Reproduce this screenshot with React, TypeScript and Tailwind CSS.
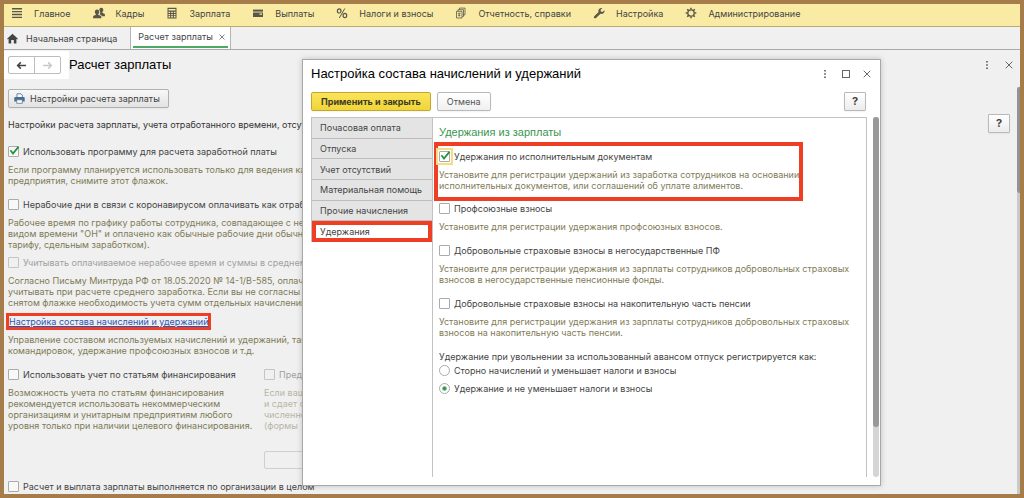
import type { ReactNode } from 'react';

type MenuEntry = { label: string; icon: ReactNode };

function Svg({ children }: { children: ReactNode }) {
  return (
    <svg viewBox="0 0 12 12" className="h-3 w-3 shrink-0 text-[#5a574a]" fill="currentColor" aria-hidden="true">
      {children}
    </svg>
  );
}

const menu: MenuEntry[] = [
  {
    label: 'Главное',
    icon: <Svg><path d="M1 1h10v1.400H1zM1 3.900h10v1.400H1zM1 6.800h10v1.400H1zM1 9.700h10v1.400H1z" /></Svg>,
  },
  {
    label: 'Кадры',
    icon: (
      <Svg>
        <path d="M8.200.8c1.300 0 2.100.9 2.100 2.200 0 .9-.4 1.700-1 2.100v.7l2.100.9c.4.2.5.5.5.9v1.600H8.800c-.1-.7-.6-1.200-1.400-1.500l-.8-.4c.4-.6.6-1.300.6-2.100 0-1-.4-1.800-1-2.300C6.400 1.500 7.200.8 8.200.8z" />
        <path d="M4 2.600c1.300 0 2.200.9 2.200 2.300 0 .9-.4 1.700-1 2.100v.8l2.500 1c.4.2.6.5.6.9v1.500H.1V9.700c0-.4.2-.7.6-.9l2.200-1V7c-.6-.4-1-1.200-1-2.100C1.900 3.500 2.700 2.600 4 2.600z" />
      </Svg>
    ),
  },
  {
    label: 'Зарплата',
    icon: (
      <Svg>
        <path fillRule="evenodd" d="M1.500.8h9v10.700h-9zM2.500 1.900v1.700h7V1.900zM2.500 4.700v1.400h1.600V4.700zM5.200 4.700v1.400h1.600V4.700zM7.900 4.700v1.400h1.600V4.700zM2.500 6.900v1.400h1.600V6.900zM5.200 6.900v1.400h1.600V6.900zM7.900 6.900v1.400h1.600V6.900zM2.500 9.100v1.400h1.600V9.100zM5.200 9.100v1.400h1.600V9.100zM7.900 9.100v1.400h1.600V9.100z" />
      </Svg>
    ),
  },
  {
    label: 'Выплаты',
    icon: (
      <Svg>
        <path d="M1 2.600h10v2H1z" />
        <path fillRule="evenodd" d="M1 5.400h10V10H1zM7.500 6.500v1.200h2.500V6.500z" />
      </Svg>
    ),
  },
  {
    label: 'Налоги и взносы',
    icon: (
      <Svg>
        <g fill="none" stroke="currentColor" strokeWidth="1.200">
          <ellipse cx="3.200" cy="3.900" rx="1.800" ry="2.100" />
          <ellipse cx="8.900" cy="8.500" rx="1.800" ry="2.100" />
          <path d="M8.800 1.500L3.300 11" strokeWidth="1" />
        </g>
      </Svg>
    ),
  },
  {
    label: 'Отчетность, справки',
    icon: (
      <Svg>
        <g fill="none" stroke="currentColor" strokeWidth=".8">
          <path d="M1.500 4.300H7V11H1.500zM3 4.100V2.700h5.500v6.700H7.200M4.500 2.500V1.100H10v6.800H8.700" />
          <path d="M2.800 6.300h2.800M4.200 6.300v3.200M3 8.300h2.400" />
        </g>
      </Svg>
    ),
  },
  {
    label: 'Настройка',
    icon: (
      <Svg>
        <path d="M11.400 3.200c.3 1.300-.1 2.400-1 3.100-.8.700-1.900.8-2.900.5L3 11c-.5.500-1.300.5-1.800 0s-.4-1.200.1-1.700L5.600 5c-.4-1-.2-2.100.5-2.900C6.900 1.200 8 .8 9.300 1.100L7.500 3l.4 1.600 1.600.4z" />
      </Svg>
    ),
  },
  {
    label: 'Администрирование',
    icon: (
      <Svg>
        <g fill="none" stroke="currentColor">
          <circle cx="6" cy="6" r="3.200" strokeWidth="1.300" />
          <path strokeWidth="1.500" d="M6 .7v1.900M6 9.400v1.900M.7 6h1.900M9.400 6h1.900M2.250 2.250l1.350 1.350M8.400 8.400l1.350 1.350M2.250 9.750L3.600 8.400M8.400 3.600l1.350-1.350" />
        </g>
      </Svg>
    ),
  },
];

const sections = [
  'Почасовая оплата',
  'Отпуска',
  'Учет отсутствий',
  'Материальная помощь',
  'Прочие начисления',
  'Удержания',
];

function CloseIcon({ className }: { className: string }) {
  return (
    <svg viewBox="0 0 8 8" className={className} fill="none" stroke="currentColor" strokeWidth=".9" aria-hidden="true">
      <path d="M.7.7l6.600 6.600M7.300.7L.7 7.300" />
    </svg>
  );
}

function MoreIcon() {
  return (
    <svg viewBox="0 0 8 10" className="h-2.5 w-2" fill="currentColor" aria-hidden="true">
      <path d="M3.200 1h1.600v1.600H3.200zM3.200 4.200h1.600v1.600H3.200zM3.200 7.400h1.600V9H3.200z" />
    </svg>
  );
}

function Arrow({ className }: { className: string }) {
  return (
    <svg viewBox="0 0 12 10" className={className} fill="none" stroke="currentColor" strokeWidth="1.700" aria-hidden="true">
      <path d="M11 5H2M5.200 1.500L1.700 5l3.500 3.500" />
    </svg>
  );
}

type CheckProps = { label: string; checked?: boolean; disabled?: boolean; focused?: boolean };

function Check({ label, checked, disabled, focused }: CheckProps) {
  return (
    <label className={`flex h-[11px] items-center gap-1 whitespace-nowrap ${disabled ? 'text-[#a0a0a0]' : 'text-[#444]'}`}>
      <span className={`relative flex shrink-0 ${focused ? 'outline-2 outline-offset-1 outline-[#f7dc83]' : ''}`}>
        <input
          type="checkbox"
          defaultChecked={checked}
          disabled={disabled}
          className={`h-[11px] w-[11px] appearance-none rounded-[1px] border ${disabled ? 'border-[#c4c4c4]' : 'border-[#ababab] bg-white/50'}`}
        />
        {checked && (
          <svg viewBox="0 0 11 11" className="pointer-events-none absolute inset-0 h-[11px] w-[11px] overflow-visible" fill="none" stroke="#279343" strokeWidth="1.800" aria-hidden="true">
            <path d="M2.400 4.300l2.600 3.300L10.600.6" />
          </svg>
        )}
      </span>
      {label}
    </label>
  );
}

function Radio({ label, checked }: { label: string; checked?: boolean }) {
  return (
    <label className="flex h-[11px] items-center gap-1 whitespace-nowrap">
      <input
        type="radio"
        name="dismissal"
        defaultChecked={checked}
        className="h-[11px] w-[11px] appearance-none rounded-full border border-[#ababab] bg-white checked:bg-[radial-gradient(circle,#279343_1px,white_3px)]"
      />
      {label}
    </label>
  );
}

function Hint({ lines, className = '' }: { lines: string[]; className?: string }) {
  return (
    <p className={`whitespace-nowrap text-[#7f7b56] ${className}`}>
      {lines.map(line => (
        <span key={line} className="block">{line}</span>
      ))}
    </p>
  );
}

function HelpButton() {
  return (
    <button type="button" className="h-[19px] w-[22px] rounded-[1px] border border-[#b9b9b9] bg-linear-to-b from-white to-[#ececec] text-[11px] font-bold text-[#444] shadow-xs">
      ?
    </button>
  );
}

function SettingsForm() {
  return (
    <div className="flex min-w-0 flex-1 flex-col items-start pl-1">
      <button type="button" className="mt-[9px] flex h-[19px] items-center gap-[5px] rounded-[2px] border border-[#b0b0b0] bg-linear-to-b from-[#f8f8f8] to-[#e2e2e2] pr-2 pl-[5px] shadow-xs">
        <svg viewBox="0 0 11 11" className="h-[11px] w-[11px]" aria-hidden="true">
          <path d="M3 .8h4l1.300 1.300v2.400H3z" fill="#fff" stroke="#5b7594" strokeWidth=".9" />
          <path d="M1.500 4h8c.8 0 1.200.5 1.200 1.200v3.200H.3V5.200C.3 4.500.700 4 1.500 4z" fill="#4a6d95" />
          <path d="M2.700 6.800h5.600v3.500H2.700z" fill="#fff" stroke="#5b7594" strokeWidth=".8" />
        </svg>
        Настройки расчета зарплаты
      </button>
      <p className="mt-[11px] whitespace-nowrap text-[#333]">Настройки расчета зарплаты, учета отработанного времени, отсут</p>
      <div className="mt-4">
        <Check label="Использовать программу для расчета заработной платы" checked />
      </div>
      <Hint className="mt-[7px]" lines={['Если программу планируется использовать только для ведения ка', 'предприятия, снимите этот флажок.']} />
      <div className="mt-[13px]">
        <Check label="Нерабочие дни в связи с коронавирусом оплачивать как отрабо" />
      </div>
      <Hint
        className="mt-[7px]"
        lines={[
          'Рабочее время по графику работы сотрудника, совпадающее с не',
          'видом времени "ОН" и оплачено как обычные рабочие дни обычны',
          'тарифу, сдельным заработком).',
        ]}
      />
      <div className="mt-[7px]">
        <Check label="Учитывать оплачиваемое нерабочее время и суммы в среднем" disabled />
      </div>
      <Hint
        className="mt-[7px]"
        lines={[
          'Согласно Письму Минтруда РФ от 18.05.2020 № 14-1/В-585, оплач',
          'учитывать при расчете среднего заработка. Если вы не согласны с',
          'снятом флажке необходимость учета сумм отдельных начислений',
        ]}
      />
      <a href="#accruals" className="mt-[5px] -ml-0.5 border-3 border-[#ee3f25] whitespace-nowrap text-[#2a55b5] underline">
        Настройка состава начислений и удержаний
      </a>
      <Hint
        className="mt-1"
        lines={['Управление составом используемых начислений и удержаний, так', 'командировок, удержание профсоюзных взносов и т.д.']}
      />
      <div className="mt-[13px] flex">
        <div className="w-64">
          <Check label="Использовать учет по статьям финансирования" />
          <Hint
            className="mt-[7px]"
            lines={[
              'Возможность учета по статьям финансирования',
              'рекомендуется использовать некоммерческим',
              'организациям и унитарным предприятиям любого',
              'уровня только при наличии целевого финансирования.',
            ]}
          />
        </div>
        <div>
          <Check label="Пред" disabled />
          <Hint className="mt-[7px] opacity-50" lines={['Если ваш', 'и сдает с', 'численно', '(формы']} />
          <button type="button" disabled aria-label="Предприятие" className="mt-5 block h-[18px] w-24 rounded-[2px] border border-[#cfcfcf]" />
        </div>
      </div>
      <div className="mt-3">
        <Check label="Расчет и выплата зарплаты выполняется по организации в целом" />
      </div>
    </div>
  );
}

function AccrualsDialog() {
  return (
    <section
      role="dialog"
      aria-labelledby="dialog-title"
      className="absolute top-[55px] right-[139px] bottom-2 left-[298px] flex flex-col border border-[#a8a8a8] bg-white pl-2 shadow-[0_0_6px_rgba(0,0,0,0.2)]"
    >
      <header className="flex h-7 shrink-0 items-center pr-[9px]">
        <h2 id="dialog-title" className="flex-1 font-['Liberation_Sans',Arial,sans-serif] text-[13px] leading-4 text-black">Настройка состава начислений и удержаний</h2>
        <div className="flex items-center gap-[13px] text-[#555]">
          <button type="button" aria-label="Еще"><MoreIcon /></button>
          <button type="button" aria-label="Развернуть" className="h-2 w-2 border border-[#666]" />
          <button type="button" aria-label="Закрыть"><CloseIcon className="h-2 w-2" /></button>
        </div>
      </header>
      <div className="mt-1 flex gap-1.5 pr-[14px]">
        <button type="button" className="h-[19px] rounded-[2px] border border-[#c5a72b] bg-linear-to-b from-[#fbe45c] to-[#f0d536] px-[9px] font-bold text-[#3d3a20] shadow-xs">
          Применить и закрыть
        </button>
        <button type="button" className="h-[19px] rounded-[2px] border border-[#b9b9b9] bg-linear-to-b from-white to-[#f0f0f0] px-[9px] text-[#555] shadow-xs">
          Отмена
        </button>
        <div className="ml-auto"><HelpButton /></div>
      </div>
      <div className="mt-1.5 mb-2 flex min-h-0 flex-1">
        <nav className="grid h-[125px] w-[121px] shrink-0 grid-rows-6 border-t border-l border-[#c2c2c2]">
          {sections.map(name => (
            <button
              key={name}
              type="button"
              className={
                name === 'Удержания'
                  ? 'border-4 border-[#ee3f25] bg-white pl-1 text-left'
                  : 'border-b border-[#bdbdbd] bg-[#e4e4e4] pl-2 text-left'
              }
            >
              {name}
            </button>
          ))}
        </nav>
        <div className="min-w-0 flex-1 border-t border-r border-l border-[#c2c2c2] pl-1.5">
          <h3 className="mt-1.5 font-['Liberation_Sans',Arial,sans-serif] text-[11px] leading-4 text-[#3a9550]">Удержания из зарплаты</h3>
          <div className="mt-0.5 mr-[63px] -ml-[5px] border-4 border-[#ee3f25] pt-[5px] pb-1.5 pl-px">
            <Check label="Удержания по исполнительным документам" checked focused />
            <Hint
              className="mt-[7px]"
              lines={['Установите для регистрации удержаний из заработка сотрудников на основании', 'исполнительных документов, или соглашений об уплате алиментов.']}
            />
          </div>
          <div className="mt-0.5">
            <Check label="Профсоюзные взносы" />
          </div>
          <Hint className="mt-[7px]" lines={['Установите для регистрации удержания профсоюзных взносов.']} />
          <div className="mt-[13px]">
            <Check label="Добровольные страховые взносы в негосударственные ПФ" />
          </div>
          <Hint
            className="mt-[7px]"
            lines={['Установите для регистрации удержания из зарплаты сотрудников добровольных страховых', 'взносов в негосударственные пенсионные фонды.']}
          />
          <div className="mt-[13px]">
            <Check label="Добровольные страховые взносы на накопительную часть пенсии" />
          </div>
          <Hint
            className="mt-[7px]"
            lines={['Установите для регистрации удержания из зарплаты сотрудников добровольных страховых', 'взносов на накопительную часть пенсии.']}
          />
          <fieldset className="mt-[13px]">
            <legend>Удержание при увольнении за использованный авансом отпуск регистрируется как:</legend>
            <div className="mt-[3px] flex flex-col gap-[7px]">
              <Radio label="Сторно начислений и уменьшает налоги и взносы" />
              <Radio label="Удержание и не уменьшает налоги и взносы" checked />
            </div>
          </fieldset>
        </div>
        <div className="mr-px ml-1.5 w-1.5 shrink-0 rounded-full bg-[#d5d5d5]">
          <div className="h-[86%] rounded-full bg-[#999]" />
        </div>
      </div>
    </section>
  );
}

export default function App() {
  return (
    <div className="relative flex h-screen flex-col overflow-hidden border-4 border-[#a67c4a] bg-[#f0f0f0] font-[Inter,Arial,sans-serif] text-[9px] leading-[11px] text-[#444]">
      {/* Main menu */}
      <nav className="flex h-[23px] shrink-0 items-center gap-[22px] border-b border-[#b9ad70] bg-[#f9eba3] pb-1 pl-[7px]">
        {menu.map(item => (
          <a key={item.label} href="#menu" className="flex items-center gap-[11px] whitespace-nowrap">
            {item.icon}
            {item.label}
          </a>
        ))}
      </nav>

      {/* Open windows */}
      <div className="flex h-[23px] shrink-0 border-b border-[#a9a9a9]">
        <button type="button" className="flex items-center gap-2 pr-[13px] pl-[3px]">
          <svg viewBox="0 0 11 11" className="h-[11px] w-[11px] text-[#444]" fill="currentColor" aria-hidden="true">
            <path d="M5.500.8L10.900 5.700l-.7.8-.8-.7v4.600H6.800V7H4.200v3.400H1.600V5.800l-.8.700-.7-.8z" />
          </svg>
          Начальная страница
        </button>
        <div className="flex flex-col border-x border-[#b5b5b5] bg-white px-0.5">
          <div className="flex flex-1 items-center gap-1.5 pr-[3px] pl-[5px]">
            <button type="button">Расчет зарплаты</button>
            <button type="button" aria-label="Закрыть вкладку"><CloseIcon className="h-1.5 w-1.5" /></button>
          </div>
          <div className="mb-px h-0.5 bg-[#4ea964]" />
        </div>
      </div>

      {/* Page */}
      <div className="flex min-h-0 flex-1">
        <div className="flex min-w-0 flex-1 flex-col">
          <header className="flex h-[30px] shrink-0 items-center">
            <div className="flex h-7 w-[65px] items-center bg-white pl-1">
              <button type="button" aria-label="Назад" className="flex h-[18px] w-[27px] items-center justify-center rounded-l-[2px] border border-[#bdbdbd]">
                <Arrow className="h-[9px] w-[11px] text-[#444]" />
              </button>
              <button type="button" aria-label="Вперед" className="-ml-px flex h-[18px] w-[27px] items-center justify-center rounded-r-[2px] border border-[#bdbdbd]">
                <Arrow className="h-[9px] w-[11px] rotate-180 text-[#c9c9c9]" />
              </button>
            </div>
            <h1 className="flex-1 font-['Liberation_Sans',Arial,sans-serif] text-[13px] leading-4 text-black">Расчет зарплаты</h1>
            <div className="flex items-center gap-[14px] pr-[7px] text-[#555]">
              <button type="button" aria-label="Еще"><MoreIcon /></button>
              <button type="button" aria-label="Закрыть"><CloseIcon className="h-2 w-2" /></button>
            </div>
          </header>
          <div className="flex min-h-0 flex-1">
            <SettingsForm />
            <div className="mt-[34px] mr-2.5"><HelpButton /></div>
          </div>
        </div>
        <div className="-ml-[3px] mt-[37px] w-[3px] bg-[#c9c9c9]">
          <div className="h-[26%] rounded-l-full bg-[#929292]" />
        </div>
      </div>

      <AccrualsDialog />
    </div>
  );
}
